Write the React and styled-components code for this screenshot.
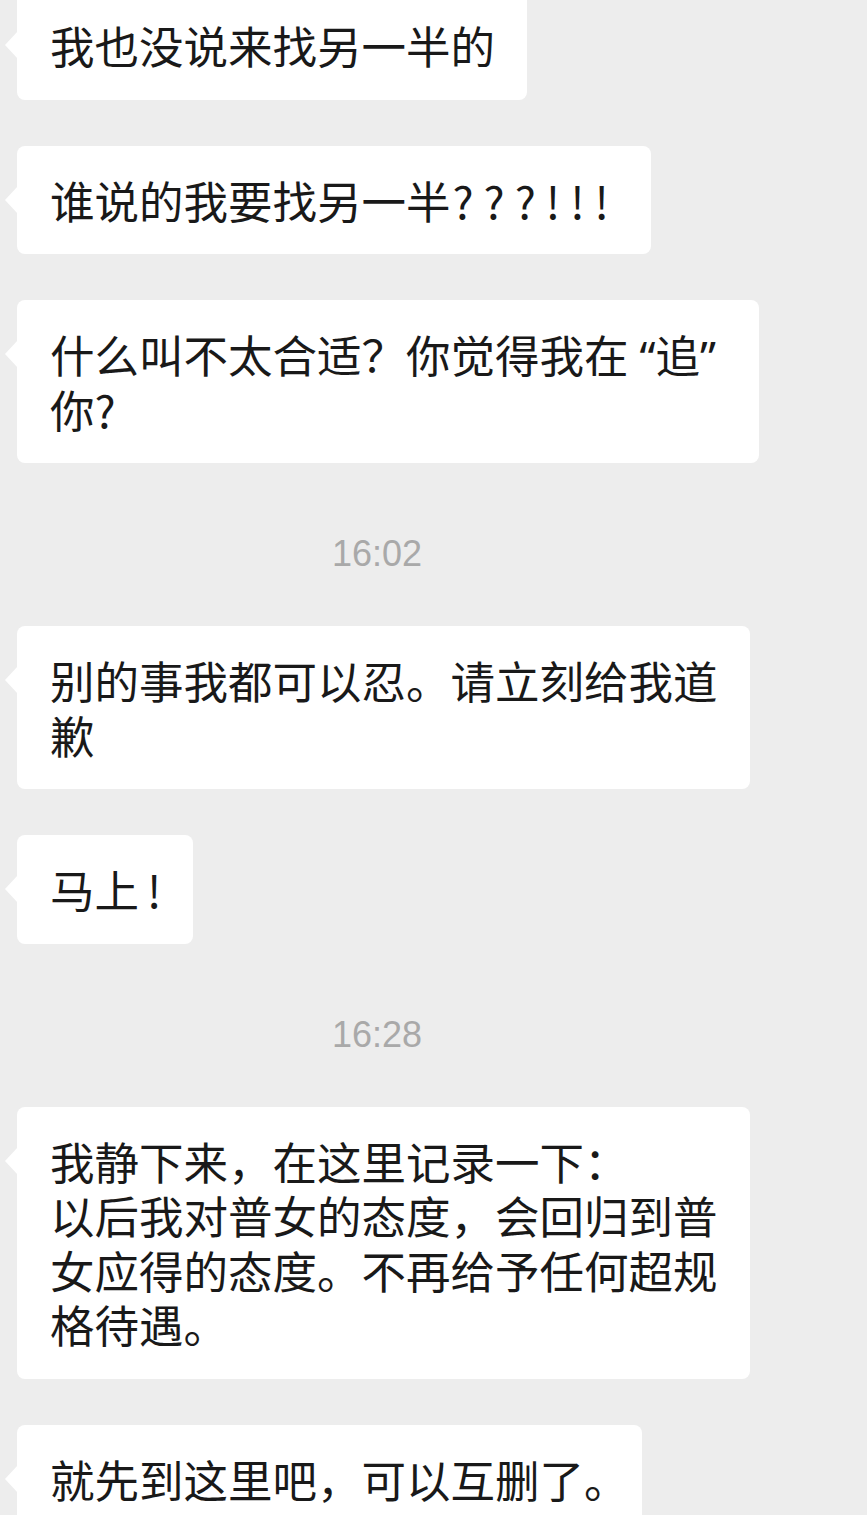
import React from "react";
import styled, { createGlobalStyle } from "styled-components";

const GlobalStyle = createGlobalStyle`
  html, body {
    margin: 0;
    padding: 0;
    background: #ededed;
    overflow: hidden;
  }
  body {
    font-family: "Noto Sans CJK SC", "Noto Sans", sans-serif;
  }
`;

const Chat = styled.div`
  display: flex;
  flex-direction: column;
  align-items: flex-start;
  gap: 46px;
  padding-left: 17px;
  margin-top: -9px;
`;

const Bubble = styled.div`
  position: relative;
  box-sizing: border-box;
  background: #ffffff;
  border-radius: 8px;
  padding: 27px 32px 27px 33px;
  font-family: "Noto Sans CJK SC", sans-serif;
  font-size: 44.5px;
  line-height: 54.5px;
  color: #191919;
  white-space: pre;

  &::before {
    content: "";
    position: absolute;
    left: -12px;
    top: 40px;
    width: 0;
    height: 0;
    border-top: 14px solid transparent;
    border-bottom: 14px solid transparent;
    border-right: 13px solid #ffffff;
  }
`;

const Punct = styled.span`
  letter-spacing: ${(p) => p.$spacing}px;
  padding-left: ${(p) => p.$lead || 0}px;
`;

const Quote = styled.span`
  display: inline-block;
  width: 27px;
  height: 40px;
  line-height: 40px;
  vertical-align: baseline;
  font-family: "Noto Sans", sans-serif;
  text-align: ${(p) => (p.$open ? "right" : "left")};
`;

const TimeRow = styled.div`
  width: 720px;
  margin: 25px 0 6px;
  text-align: center;
  font-family: "Liberation Sans", "Noto Sans", sans-serif;
  font-size: 36px;
  line-height: 40px;
  color: #a9a9a9;
`;

const items = [
  { type: "msg", content: "我也没说来找另一半的" },
  {
    type: "msg",
    content: (
      <>
        谁说的我要找另一半
        <Punct $spacing={10} $lead={2}>???</Punct>
        <Punct $spacing={10}>!!!</Punct>
      </>
    ),
  },
  {
    type: "msg",
    content: (
      <>
        什么叫不太合适？你觉得我在<Quote $open>“</Quote>追<Quote>”</Quote>
        {"\n"}你?
      </>
    ),
  },
  { type: "time", content: "16:02" },
  { type: "msg", content: "别的事我都可以忍。请立刻给我道\n歉" },
  {
    type: "msg",
    content: (
      <>
        马上<Punct $spacing={0} $lead={8}>!</Punct>
      </>
    ),
  },
  { type: "time", content: "16:28" },
  {
    type: "msg",
    content:
      "我静下来，在这里记录一下：\n以后我对普女的态度，会回归到普\n女应得的态度。不再给予任何超规\n格待遇。",
  },
  {
    type: "msg",
    content: (
      <>
        就先到这里吧，可以互删了<Punct $spacing={-19}>。</Punct>
      </>
    ),
  },
];

export default function App() {
  return (
    <>
      <GlobalStyle />
      <Chat>
        {items.map((it, i) =>
          it.type === "time" ? (
            <TimeRow key={i}>{it.content}</TimeRow>
          ) : (
            <Bubble key={i}>{it.content}</Bubble>
          )
        )}
      </Chat>
    </>
  );
}
